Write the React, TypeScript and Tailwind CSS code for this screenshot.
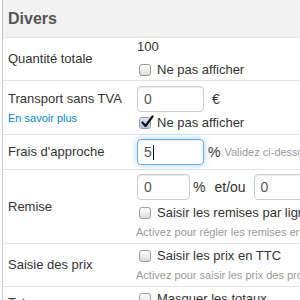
const font = { fontFamily: '"Liberation Sans", Arial, sans-serif' }

function Check({ checked = false }: { checked?: boolean }) {
  return (
    <span className="relative ml-[2px] inline-block h-[12px] w-[12px] shrink-0 rounded-[3px] border border-[#9a9a9a] bg-gradient-to-b from-white to-[#dcdcdc]">
      {checked && (
        <>
          <span className="absolute inset-0 rounded-[2px] bg-gradient-to-b from-[#dbe7f5] to-[#a9c4e8]" />
          <svg viewBox="0 0 14 14" className="absolute -top-[3px] left-[0px] h-[14px] w-[14px]">
            <path d="M2.5 7.5 L5.5 11 L12.5 1.5" fill="none" stroke="#111" strokeWidth="2.2" strokeLinecap="round" strokeLinejoin="round" />
          </svg>
        </>
      )}
    </span>
  )
}

function CheckLine({ label, checked }: { label: string; checked?: boolean }) {
  return (
    <div className="flex h-[18px] items-center gap-[6px] whitespace-nowrap text-[13px] text-[#333]">
      <Check checked={checked} />
      <span>{label}</span>
    </div>
  )
}

function Field({ value, w = "w-[67px]", focused = false }: { value: string; w?: string; focused?: boolean }) {
  return (
    <div
      className={`flex h-[26px] ${w} shrink-0 items-center rounded-[4px] border bg-white pl-[6px] text-[14px] text-[#555] ${
        focused
          ? "border-[#66afe9] shadow-[inset_0_1px_1px_rgba(0,0,0,0.075),0_0_6px_rgba(102,175,233,0.6)]"
          : "border-[#ccc] shadow-[inset_0_1px_1px_rgba(0,0,0,0.075)]"
      }`}
    >
      <span>{value}</span>
      {focused && <span className="ml-[1px] h-[15px] w-px bg-black" />}
    </div>
  )
}

function Hint({ children }: { children: string }) {
  return <div className="-ml-[1px] h-[14px] whitespace-nowrap text-[11px] leading-[14px] text-[#999]">{children}</div>
}

function Row({ label, sub, h, children, top }: { label: string; sub?: string; h: string; children: React.ReactNode; top: string }) {
  return (
    <div className={`flex ${h} border-b border-[#e3e3e3]`}>
      <div className="flex w-[134px] shrink-0 flex-col justify-center pl-[5px] text-[13px] text-[#333]">
        <div className="whitespace-nowrap leading-[18px]">{label}</div>
        {sub && <div className="mt-[3px] text-[11px] leading-[14px] text-[#0088cc]">{sub}</div>}
      </div>
      <div className={`flex min-w-0 flex-1 flex-col ${top}`}>{children}</div>
    </div>
  )
}

export default function App() {
  return (
    <div className="h-[300px] w-[300px] overflow-hidden bg-white" style={font}>
      <div className="ml-[2px] h-full border-l border-[#c8c8c8]">
        <div className="flex h-[38px] items-center border-b border-[#e3e3e3] bg-[#f2f2f2] pl-[5px] text-[16px] font-bold text-[#555]">
          Divers
        </div>

        <Row label="Quantité totale" h="h-[43px]" top="pt-[1px] gap-[6px]">
          <div className="text-[13px] leading-[16px] text-[#333]">100</div>
          <CheckLine label="Ne pas afficher" />
        </Row>

        <Row label="Transport sans TVA" sub="En savoir plus" h="h-[54px]" top="pt-[5px] gap-[2px]">
          <div className="flex items-center gap-[8px] text-[14px] text-[#333]">
            <Field value="0" />
            <span>€</span>
          </div>
          <CheckLine label="Ne pas afficher" checked />
        </Row>

        <Row label="Frais d'approche" h="h-[35px]" top="justify-center">
          <div className="flex items-center whitespace-nowrap text-[14px] text-[#333]">
            <Field value="5" focused />
            <span className="ml-[4px]">%</span>
            <span className="ml-[4px] text-[11px] text-[#999]">Validez ci-dessous pour appliquer</span>
          </div>
        </Row>

        <Row label="Remise" h="h-[74px]" top="pt-[4px]">
          <div className="flex items-center whitespace-nowrap text-[14px] text-[#333]">
            <Field value="0" w="w-[53px]" />
            <span className="ml-[3px]">%</span>
            <span className="ml-[9px]">et/ou</span>
            <span className="ml-[8px]">
              <Field value="0" w="w-[80px]" />
            </span>
          </div>
          <div className="mt-[4px]">
            <CheckLine label="Saisir les remises par ligne" />
          </div>
          <div className="mt-[3px]">
            <Hint>Activez pour régler les remises en ligne</Hint>
          </div>
        </Row>

        <Row label="Saisie des prix" h="h-[43px]" top="pt-[3px] gap-[3px]">
          <CheckLine label="Saisir les prix en TTC" />
          <Hint>Activez pour saisir les prix des produits en TTC</Hint>
        </Row>

        <Row label="Totaux" h="h-[32px]" top="pt-[3px]">
          <CheckLine label="Masquer les totaux" />
        </Row>
      </div>
    </div>
  )
}
